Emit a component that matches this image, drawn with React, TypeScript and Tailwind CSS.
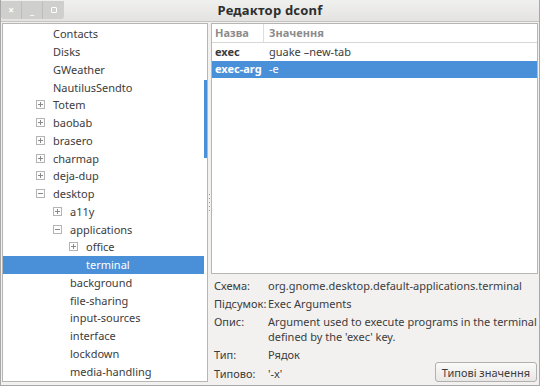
import React from "react";

type Node = { label: string; level: number; exp?: "+" | "-"; sel?: boolean };

const tree: Node[] = [
  { label: "Contacts", level: 0 },
  { label: "Disks", level: 0 },
  { label: "GWeather", level: 0 },
  { label: "NautilusSendto", level: 0 },
  { label: "Totem", level: 0, exp: "+" },
  { label: "baobab", level: 0, exp: "+" },
  { label: "brasero", level: 0, exp: "+" },
  { label: "charmap", level: 0, exp: "+" },
  { label: "deja-dup", level: 0, exp: "+" },
  { label: "desktop", level: 0, exp: "-" },
  { label: "a11y", level: 1, exp: "+" },
  { label: "applications", level: 1, exp: "-" },
  { label: "office", level: 2, exp: "+" },
  { label: "terminal", level: 2, sel: true },
  { label: "background", level: 1 },
  { label: "file-sharing", level: 1 },
  { label: "input-sources", level: 1 },
  { label: "interface", level: 1 },
  { label: "lockdown", level: 1 },
  { label: "media-handling", level: 1 },
];

const levelPad = ["pl-[33px]", "pl-[50px]", "pl-[66px]"];

function Expander({ kind }: { kind?: "+" | "-" }) {
  if (!kind) return <span className="w-[9px] h-[9px] shrink-0" />;
  return (
    <svg width="9" height="9" viewBox="0 0 9 9" className="shrink-0">
      <rect x="0.5" y="0.5" width="8" height="8" fill="#fdfdfd" stroke="#b4b4b4" />
      <line x1="2" y1="4.5" x2="7" y2="4.5" stroke="#8a8a8a" />
      {kind === "+" && <line x1="4.5" y1="2" x2="4.5" y2="7" stroke="#8a8a8a" />}
    </svg>
  );
}

export default function App() {
  return (
    <div
      className="w-[540px] h-[386px] bg-[#f2f1f0] flex flex-col text-[11px] text-[#3c3c3c] border-l border-b border-r border-[#a8a8a8] overflow-hidden"
      style={{ fontFamily: '"Noto Sans", "DejaVu Sans", sans-serif' }}
    >
      {/* Title bar */}
      <div className="h-[22px] shrink-0 grid grid-cols-[1fr_auto_1fr] items-center bg-gradient-to-b from-[#f0f0ef] to-[#e4e3e1] border-b border-[#c4c4c4]">
        <div className="flex items-center self-start pt-[1px]">
          <div className="flex h-[18px] rounded-b-[3px] overflow-hidden">
            <div className="w-[21px] bg-[#cfcfcd] border-r border-[#bdbdbb] flex items-center justify-center text-white text-[10px] font-bold">×</div>
            <div className="w-[21px] bg-[#cfcfcd] border-r border-[#bdbdbb] flex items-center justify-center text-white text-[10px] font-bold">_</div>
            <div className="w-[21px] bg-[#cfcfcd] flex items-center justify-center">
              <span className="w-[6px] h-[6px] border-[1.5px] border-white rounded-[1px]" />
            </div>
          </div>
        </div>
        <div className="font-bold text-[13px] text-[#2e2e2e] tracking-[0.2px]">Редактор dconf</div>
        <div />
      </div>

      {/* Body */}
      <div className="flex-1 flex pl-[1px] pr-[1px] pt-[1px] pb-[3px] min-h-0">
        {/* Left tree */}
        <div className="w-[206px] shrink-0 bg-white border border-[#b6b6b4] relative overflow-hidden">
          <div className="pt-[1px]">
            {tree.map((n) => (
              <div
                key={n.label}
                className={
                  "h-[17.75px] flex items-center gap-[8px] " +
                  levelPad[n.level] +
                  (n.sel ? " bg-[#4a90d9] text-white mr-[3px]" : "")
                }
              >
                <Expander kind={n.exp} />
                <span className="leading-none">{n.label}</span>
              </div>
            ))}
          </div>
          {/* scrollbar */}
          <div className="absolute right-0 top-[56px] w-[3px] h-[78px] bg-[#4a90d9]" />
        </div>

        {/* Pane handle */}
        <div className="w-[3px] shrink-0 flex items-center justify-center">
          <div className="flex flex-col gap-[3px]">
            <span className="w-[1px] h-[1px] bg-[#9a9a9a]" />
            <span className="w-[1px] h-[1px] bg-[#9a9a9a]" />
            <span className="w-[1px] h-[1px] bg-[#9a9a9a]" />
            <span className="w-[1px] h-[1px] bg-[#9a9a9a]" />
            <span className="w-[1px] h-[1px] bg-[#9a9a9a]" />
          </div>
        </div>

        {/* Right side */}
        <div className="flex-1 flex flex-col min-w-0">
          <div className="h-[251px] shrink-0 bg-white border border-[#b6b6b4]">
            <div className="h-[19px] flex items-stretch border-b border-[#d8d8d6] text-[#8c8c8c] font-bold">
              <div className="w-[52px] pl-[3px] flex items-center border-r border-[#dedede]">Назва</div>
              <div className="pl-[5px] flex items-center">Значення</div>
            </div>
            <div className="h-[17.5px] flex items-center">
              <div className="w-[52px] pl-[3px] font-bold">exec</div>
              <div className="pl-[5px]">guake –new-tab</div>
            </div>
            <div className="h-[17.5px] flex items-center bg-[#4a90d9] text-white">
              <div className="w-[52px] pl-[3px] font-bold">exec-arg</div>
              <div className="pl-[5px]">-e</div>
            </div>
          </div>

          <div className="flex-1 flex flex-col gap-[3px] pt-[4px] pl-[3px] pr-[1px] leading-[15px]">
            <div className="flex">
              <div className="w-[54px] shrink-0">Схема:</div>
              <div>org.gnome.desktop.default-applications.terminal</div>
            </div>
            <div className="flex">
              <div className="w-[54px] shrink-0">Підсумок:</div>
              <div>Exec Arguments</div>
            </div>
            <div className="flex">
              <div className="w-[54px] shrink-0">Опис:</div>
              <div>
                Argument used to execute programs in the terminal
                <br />
                defined by the 'exec' key.
              </div>
            </div>
            <div className="flex">
              <div className="w-[54px] shrink-0">Тип:</div>
              <div>Рядок</div>
            </div>
            <div className="flex items-start">
              <div className="w-[54px] shrink-0 pt-[1px]">Типово:</div>
              <div className="flex-1 pt-[1px]">'-x'</div>
              <button className="h-[20px] px-[6px] mt-[-3px] rounded-[3px] border border-[#b0b0ae] bg-gradient-to-b from-[#fafafa] to-[#e8e7e5] text-[11px] text-[#3c3c3c] leading-none">
                Типові значення
              </button>
            </div>
          </div>
        </div>
      </div>
    </div>
  );
}
